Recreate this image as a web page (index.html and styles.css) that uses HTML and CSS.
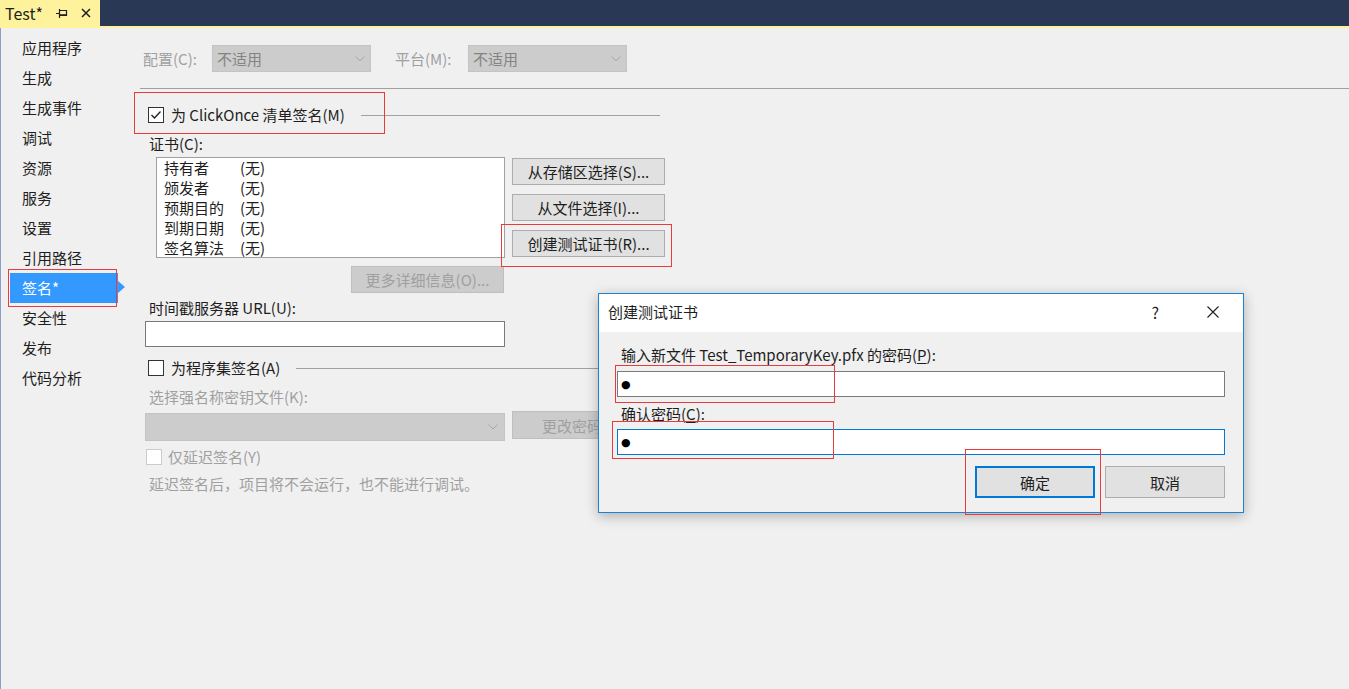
FILE: index.html
```html
<!DOCTYPE html>
<html lang="zh-CN">
<head>
<meta charset="utf-8">
<title>Test</title>
<link rel="stylesheet" href="styles.css">
</head>
<body>
<header class="topbar">
  <div class="doctab">
    <span class="doctab-title">Test*</span>
    <svg class="pin" width="12" height="10" viewBox="0 0 12 10">
      <path d="M0 5.5H3.5M3.5 1V10M3.5 2.5H10.5V7.5H3.5" fill="none" stroke="#1e1e1e" stroke-width="1.2"/>
      <path d="M3.5 7H10.5" stroke="#1e1e1e" stroke-width="1.6"/>
    </svg>
    <svg class="tabclose" width="10" height="10" viewBox="0 0 10 10">
      <path d="M1 1L9 9M9 1L1 9" stroke="#1e1e1e" stroke-width="1.5"/>
    </svg>
  </div>
</header>
<div class="accent"></div>
<div class="workspace">
  <nav class="sidebar">
    <div class="nav-item">应用程序</div>
    <div class="nav-item">生成</div>
    <div class="nav-item">生成事件</div>
    <div class="nav-item">调试</div>
    <div class="nav-item">资源</div>
    <div class="nav-item">服务</div>
    <div class="nav-item">设置</div>
    <div class="nav-item">引用路径</div>
    <div class="nav-item active">签名*</div>
    <div class="nav-item">安全性</div>
    <div class="nav-item">发布</div>
    <div class="nav-item">代码分析</div>
  </nav>
  <main class="content">
    <div class="config-row">
      <span class="cfg-label">配置(C):</span>
      <div class="combo cfg-combo"><span>不适用</span><svg class="chev" width="10" height="6" viewBox="0 0 10 6"><path d="M0.5 0.5L5 5L9.5 0.5" fill="none" stroke="#a6a6a6"/></svg></div>
      <span class="cfg-label plat">平台(M):</span>
      <div class="combo cfg-combo"><span>不适用</span><svg class="chev" width="10" height="6" viewBox="0 0 10 6"><path d="M0.5 0.5L5 5L9.5 0.5" fill="none" stroke="#a6a6a6"/></svg></div>
    </div>
    <div class="rule"></div>

    <div class="check-row first">
      <span class="checkbox"><svg width="14" height="14" viewBox="0 0 14 14"><path d="M2.5 7L5.5 10L11.5 3.5" fill="none" stroke="#1e1e1e" stroke-width="1.3"/></svg></span>
      <span class="check-text">为 ClickOnce 清单签名(M)</span>
      <span class="group-line"></span>
    </div>

    <div class="label cert-label">证书(C):</div>
    <div class="cert-row">
      <div class="listbox">
        <div class="lb-row"><span>持有者</span><span>(无)</span></div>
        <div class="lb-row"><span>颁发者</span><span>(无)</span></div>
        <div class="lb-row"><span>预期目的</span><span>(无)</span></div>
        <div class="lb-row"><span>到期日期</span><span>(无)</span></div>
        <div class="lb-row"><span>签名算法</span><span>(无)</span></div>
      </div>
      <div class="btn-col">
        <div class="btn">从存储区选择(S)...</div>
        <div class="btn">从文件选择(I)...</div>
        <div class="btn">创建测试证书(R)...</div>
      </div>
    </div>
    <div class="btn disabled more-btn">更多详细信息(O)...</div>

    <div class="label url-label">时间戳服务器 URL(U):</div>
    <div class="textbox url-box"></div>

    <div class="check-row assembly">
      <span class="checkbox"></span>
      <span class="check-text">为程序集签名(A)</span>
      <span class="group-line"></span>
    </div>

    <div class="label disabled-text key-label">选择强名称密钥文件(K):</div>
    <div class="key-row">
      <div class="combo key-combo"><span></span><svg class="chev" width="10" height="6" viewBox="0 0 10 6"><path d="M0.5 0.5L5 5L9.5 0.5" fill="none" stroke="#a6a6a6"/></svg></div>
      <div class="btn disabled key-btn">更改密码(W)...</div>
    </div>

    <div class="check-row delay">
      <span class="checkbox disabled-box"></span>
      <span class="check-text disabled-text">仅延迟签名(Y)</span>
    </div>
    <div class="label disabled-text hint">延迟签名后，项目将不会运行，也不能进行调试。</div>
  </main>
</div>

<section class="dialog">
  <div class="dlg-title">
    <span class="dlg-title-text">创建测试证书</span>
    <span class="dlg-help">?</span>
    <svg class="dlg-close" width="12" height="12" viewBox="0 0 12 12"><path d="M0.5 0.5L11.5 11.5M11.5 0.5L0.5 11.5" stroke="#1e1e1e" stroke-width="1.1"/></svg>
  </div>
  <div class="dlg-body">
    <div class="dlg-label">输入新文件 Test_TemporaryKey.pfx 的密码(<u>P</u>):</div>
    <div class="dlg-input"><span class="pw">●</span></div>
    <div class="dlg-label second">确认密码(<u>C</u>):</div>
    <div class="dlg-input focused"><span class="pw">●</span></div>
    <div class="dlg-buttons">
      <div class="dlg-btn default">确定</div>
      <div class="dlg-btn">取消</div>
    </div>
  </div>
</section>

<div class="annot annot-clickonce"></div>
<div class="annot annot-create"></div>
<div class="annot annot-nav"></div>
<div class="annot annot-pw1"></div>
<div class="annot annot-pw2"></div>
<div class="annot annot-ok"></div>
</body>
</html>
```
FILE: styles.css
```css
* { box-sizing: border-box; }
html, body { margin: 0; padding: 0; }
body {
  width: 1349px;
  height: 689px;
  overflow: hidden;
  position: relative;
  background: #f0f0f0;
  font-family: "Noto Sans CJK SC", "Noto Sans", sans-serif;
  font-size: 15px;
  color: #1e1e1e;
}

/* top document tab bar */
.topbar { height: 26px; background: #293955; display: flex; }
.doctab {
  width: 100px;
  background: #fff29d;
  display: flex;
  align-items: center;
  padding-left: 5px;
}
.doctab-title { font-size: 16px; line-height: 26px; }
.pin { margin-left: 13px; }
.tabclose { margin-left: 13px; }
.accent { height: 2px; background: #fff29d; }

/* workspace */
.workspace {
  display: flex;
  height: 661px;
  border-left: 1px solid #8b9dc8;
}
.sidebar { width: 139px; flex: none; padding-top: 5px; }
.nav-item {
  height: 30px;
  line-height: 30px;
  margin-left: 9px;
  width: 108px;
  padding-left: 12px;
  white-space: nowrap;
}
.nav-item.active { background: #3399ff; color: #fff; position: relative; }
.nav-item.active::after {
  content: "";
  position: absolute;
  left: 100%;
  top: 8px;
  border-left: 7px solid #3399ff;
  border-top: 6px solid transparent;
  border-bottom: 6px solid transparent;
}

.content { flex: 1; }

.config-row {
  margin-top: 17px;
  height: 27px;
  display: flex;
  align-items: center;
  padding-left: 3px;
  color: #a0a0a0;
}
.cfg-label { width: 69px; white-space: nowrap; }
.cfg-label.plat { width: 73px; margin-left: 24px; }
.combo {
  background: #cccccc;
  border: 1px solid #c4c4c4;
  display: flex;
  align-items: center;
  justify-content: space-between;
  padding: 0 5px 0 4px;
  color: #838383;
}
.cfg-combo { width: 159px; height: 27px; }
.chev { flex: none; }

.rule { margin-top: 16px; height: 1px; background: #a0a0a0; }

.check-row {
  display: flex;
  align-items: center;
  height: 20px;
  padding-left: 8px;
  width: 520px;
}
.check-row.first { margin-top: 16px; }
.checkbox {
  width: 16px;
  height: 16px;
  flex: none;
  border: 1px solid #333333;
  background: #ffffff;
  display: flex;
  align-items: center;
  justify-content: center;
}
.check-text { margin-left: 7px; white-space: nowrap; line-height: 20px; }
.group-line { flex: 1; height: 1px; background: #a0a0a0; margin-left: 16px; }

.label { height: 20px; line-height: 20px; padding-left: 9px; white-space: nowrap; }
.cert-label { margin-top: 9px; }
.disabled-text { color: #a0a0a0; }

.cert-row { margin-top: 3px; display: flex; padding-left: 16px; }
.listbox {
  width: 349px;
  height: 101px;
  background: #ffffff;
  border: 1px solid #a0a0a0;
  padding: 0 0 0 7px;
}
.lb-row { display: grid; grid-template-columns: 76px 1fr; height: 20px; line-height: 20px; }
.btn-col { margin-left: 7px; padding-top: 1px; display: flex; flex-direction: column; gap: 9px; }
.btn {
  width: 153px;
  height: 27px;
  background: #e1e1e1;
  border: 1px solid #adadad;
  display: flex;
  align-items: center;
  justify-content: center;
  white-space: nowrap;
}
.btn.disabled { background: #cccccc; border-color: #bfbfbf; color: #a0a0a0; }
.more-btn { margin-top: 8px; margin-left: 211px; }

.url-label { margin-top: 5px; }
.textbox { background: #ffffff; border: 1px solid #7a7a7a; }
.url-box { margin-top: 3px; margin-left: 5px; width: 360px; height: 26px; }

.check-row.assembly { margin-top: 11px; }
.key-label { margin-top: 9px; }
.key-row { margin-top: 4px; display: flex; align-items: flex-start; padding-left: 5px; }
.key-combo { margin-top: 2px; width: 360px; height: 28px; padding-right: 6px; }
.key-btn { margin-left: 7px; height: 28px; justify-content: flex-start; padding-left: 29px; }

.check-row.delay { margin-top: 6px; padding-left: 6px; }
.disabled-box { border-color: #cccccc; }
.delay .check-text { margin-left: 6px; }
.hint { margin-top: 7px; }

/* dialog */
.dialog {
  position: absolute;
  left: 598px;
  top: 293px;
  width: 646px;
  background: #f0f0f0;
  border: 1px solid #1883d7;
  box-shadow: 0 3px 12px rgba(0, 0, 0, 0.28);
}
.dlg-title {
  height: 38px;
  background: #ffffff;
  display: flex;
  align-items: center;
  padding-left: 9px;
  padding-bottom: 3px;
}
.dlg-title-text { flex: 1; }
.dlg-help { font-size: 16px; margin-right: 48px; }
.dlg-close { margin-right: 24px; }
.dlg-body { padding: 13px 18px 14px 18px; }
.dlg-label { height: 20px; line-height: 20px; padding-left: 4px; white-space: nowrap; }
.dlg-label.second { margin-top: 7px; }
.dlg-label u { text-underline-offset: 2px; }
.dlg-input {
  margin-top: 6px;
  height: 26px;
  background: #ffffff;
  border: 1px solid #7a7a7a;
  display: flex;
  align-items: center;
  padding-left: 3px;
}
.dlg-input.focused { margin-top: 5px; border-color: #0078d7; }
.pw { font-family: "DejaVu Sans", sans-serif; font-size: 11px; line-height: 1; color: #000; }
.dlg-buttons { margin-top: 11px; display: flex; justify-content: flex-end; gap: 10px; }
.dlg-btn {
  width: 120px;
  height: 32px;
  background: #e1e1e1;
  border: 1px solid #adadad;
  display: flex;
  align-items: center;
  justify-content: center;
}
.dlg-btn.default { border: 2px solid #0078d7; }

/* red annotation frames */
.annot { position: absolute; border: 1px solid #ec3a3a; pointer-events: none; }
.annot-clickonce { left: 134px; top: 92px; width: 251px; height: 42px; }
.annot-create { left: 501px; top: 224px; width: 171px; height: 43px; }
.annot-nav { left: 8px; top: 269px; width: 109px; height: 38px; }
.annot-pw1 { left: 615px; top: 365px; width: 220px; height: 38px; }
.annot-pw2 { left: 612px; top: 421px; width: 222px; height: 38px; }
.annot-ok { left: 965px; top: 449px; width: 136px; height: 66px; }
```
